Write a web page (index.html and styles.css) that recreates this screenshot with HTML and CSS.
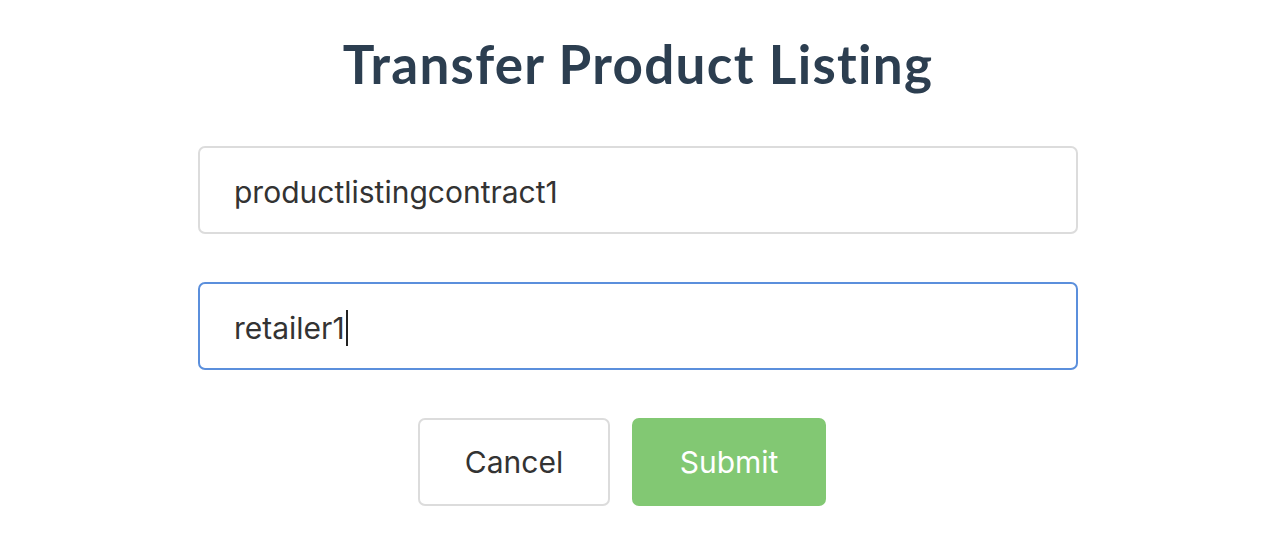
FILE: index.html
```html
<!DOCTYPE html>
<html>
<head>
<meta charset="utf-8">
<link rel="stylesheet" href="styles.css">
</head>
<body>
<main class="page">
  <h1 class="title">Transfer Product Listing</h1>
  <form class="form">
    <div class="field">productlistingcontract1</div>
    <div class="field field--focus">retailer1<span class="caret"></span></div>
    <div class="actions">
      <button type="button" class="btn btn--cancel">Cancel</button>
      <button type="button" class="btn btn--submit">Submit</button>
    </div>
  </form>
</main>
</body>
</html>
```

FILE: styles.css
```css
html, body {
  margin: 0;
  padding: 0;
  background: #fff;
}
.page {
  display: flex;
  flex-direction: column;
  align-items: center;
  padding-top: 28px;
}
.title {
  margin: 0 0 0 -2px;
  font-family: "Lato", "Noto Sans", sans-serif;
  font-weight: 700;
  font-size: 53px;
  line-height: 72px;
  color: #2c3e50;
  letter-spacing: 1.3px;
}
.form {
  display: flex;
  flex-direction: column;
  align-items: center;
  margin-top: 46px;
  gap: 48px;
}
.field {
  box-sizing: border-box;
  width: 880px;
  height: 88px;
  margin-left: -2px;
  border: 2px solid #dcdcdc;
  border-radius: 7px;
  padding: 0 34px;
  display: flex;
  align-items: center;
  font-family: "Inter", "Liberation Sans", sans-serif;
  font-size: 30px;
  color: #333;
  padding-top: 4px;
}
.field--focus {
  border-color: #5b8fdc;
}
.caret {
  display: inline-block;
  width: 2px;
  height: 36px;
  background: #222;
  margin-left: 1px;
}
.actions {
  display: flex;
  gap: 22px;
  margin-right: 34px;
}
.btn {
  box-sizing: border-box;
  height: 88px;
  border-radius: 7px;
  font-family: "Inter", "Liberation Sans", sans-serif;
  font-size: 30px;
  cursor: pointer;
}
.btn--cancel {
  width: 192px;
  background: #fff;
  border: 2px solid #dcdcdc;
  color: #333;
}
.btn--submit {
  width: 194px;
  background: #82c873;
  border: none;
  color: #fff;
}
```
